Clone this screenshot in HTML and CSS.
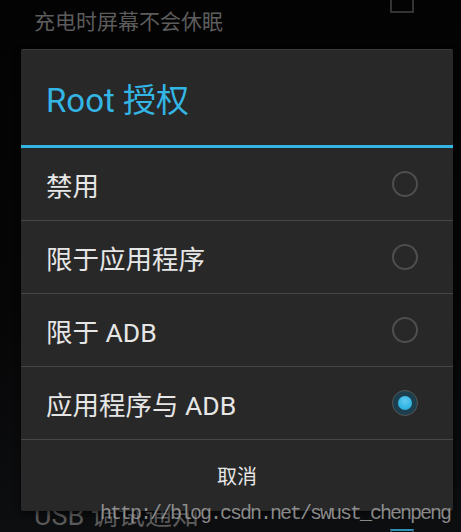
FILE: index.html
```html
<!DOCTYPE html>
<html lang="zh-CN">
<head>
    <meta charset="UTF-8">
    <meta name="viewport" content="width=device-width, initial-scale=1.0">
    <title>Root 授权</title>
    <link rel="stylesheet" href="styles.css">
</head>
<body>

    <!-- Liste des paramètres derrière la boîte -->
    <div class="settings">
        <div class="pref pref-top">
            <span class="summary">充电时屏幕不会休眠</span>
            <span class="check"></span>
        </div>
        <div class="pref pref-usb">
            <span class="pref-title">USB 调试通知</span>
            <span class="check check-on"></span>
        </div>
    </div>

    <!-- Boîte de dialogue -->
    <div class="dialog">
        <div class="dialog-title">Root 授权</div>
        <div class="dialog-line"></div>
        <div class="choices">
            <div class="choice">
                <span>禁用</span>
                <span class="radio"></span>
            </div>
            <div class="choice">
                <span>限于应用程序</span>
                <span class="radio"></span>
            </div>
            <div class="choice">
                <span>限于 ADB</span>
                <span class="radio"></span>
            </div>
            <div class="choice">
                <span>应用程序与 ADB</span>
                <span class="radio checked"></span>
            </div>
        </div>
        <div class="dialog-btn">取消</div>
    </div>

    <div class="watermark">http://blog.csdn.net/swust_chenpeng</div>

</body>
</html>
```

FILE: styles.css
```css
/* Style général */
body {
    margin: 0;
    height: 532px;
    overflow: hidden;
    background: linear-gradient(180deg, #030303 0%, #060607 60%, #0d0e10 100%);
    font-family: Roboto, "Noto Sans CJK SC", sans-serif;
    color: #e6e6e6;
}

/* Paramètres en arrière-plan */
.settings {
    display: flex;
    flex-direction: column;
}

.pref {
    display: flex;
    justify-content: space-between;
    padding: 0 47px 0 34px;
}

.pref-top {
    height: 72px;
    margin-top: -35px;
    align-items: center;
}

.pref-top .summary {
    align-self: flex-end;
    margin-bottom: 4px;
    font-size: 21px;
    line-height: 21px;
    color: #5c5c5c;
}

.pref-usb {
    margin-top: 464px;
    align-items: flex-start;
}

.pref-title {
    font-size: 27px;
    line-height: 30px;
    color: #595959;
}

.check {
    width: 24px;
    height: 24px;
    box-sizing: border-box;
    border: 2px solid #333;
}

.check-on {
    margin-top: 28px;
    border-color: #2a4f5e;
    border-top-color: #2f8fb5;
}

/* Boîte de dialogue */
.dialog {
    position: absolute;
    top: 49px;
    left: 21px;
    width: 432px;
    background: #282828;
    border-top: 1px solid #3a3a3a;
    border-radius: 2px;
    box-shadow: 0 2px 6px rgba(0, 0, 0, 0.6);
    display: flex;
    flex-direction: column;
}

.dialog-title {
    height: 95px;
    display: flex;
    align-items: center;
    padding-left: 25px;
    font-size: 33px;
    color: #33b5e5;
}

.dialog-line {
    height: 3px;
    background: #33b5e5;
}

.choices {
    display: flex;
    flex-direction: column;
}

.choice {
    height: 73px;
    box-sizing: border-box;
    border-bottom: 1px solid #464646;
    display: flex;
    align-items: center;
    justify-content: space-between;
    padding: 0 35px 0 25px;
    font-size: 26.5px;
}

/* Boutons radio */
.radio {
    width: 26px;
    height: 26px;
    box-sizing: border-box;
    border-radius: 50%;
    border: 2px solid #4e4e4e;
    display: flex;
    align-items: center;
    justify-content: center;
}

.radio.checked {
    border: 1.5px solid #555;
    background: #1c3e4d;
}

.radio.checked::after {
    content: "";
    width: 14px;
    height: 14px;
    border-radius: 50%;
    background: radial-gradient(circle at 50% 35%, #5fcaf0, #33b5e5 60%, #2aa3d0);
}

.dialog-btn {
    height: 71px;
    display: flex;
    align-items: center;
    justify-content: center;
    font-size: 20px;
}

/* Filigrane */
.watermark {
    position: absolute;
    left: 100px;
    top: 502px;
    font-family: "Liberation Mono", monospace;
    font-size: 20px;
    letter-spacing: -2px;
    color: rgba(160, 160, 160, 0.85);
}
```
